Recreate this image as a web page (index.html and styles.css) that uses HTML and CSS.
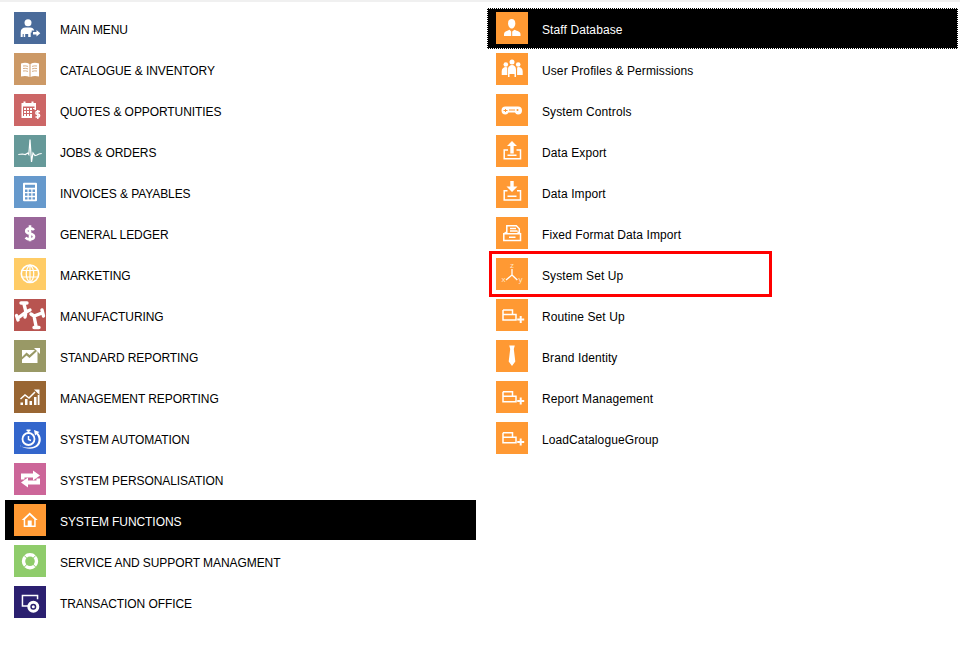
FILE: index.html
```html
<!DOCTYPE html>
<html lang="en">
<head>
<meta charset="utf-8">
<title>Menu</title>
<link rel="stylesheet" href="styles.css">
</head>
<body>
<div class="topstrip"></div>
<div class="columns">
  <ul class="menu menu-left">
    <li class="row"><span class="tile c-main"><svg viewBox="0 0 32 32"><circle cx="14" cy="10.700" r="3.500"/><path d="M6.700 25v-5c0-3 2-4.500 5-4.500h4.500c2 0 3.500 1 4 3h-2.500v2h-1v4.500h-2.500v-3h-3v3h-1.500v-3h-1v3z"/><path d="M19 20h3.500v-2l3.800 3.200-3.800 3.200v-2H19z"/></svg></span><span class="label">MAIN MENU</span></li>
    <li class="row"><span class="tile c-cat"><svg viewBox="0 0 32 32"><path d="M7 10.500c3-1 6-1 8.500.5v13c-2.500-1.300-5.500-1.300-8.500-.5z"/><path d="M25 10.500c-3-1-6-1-8.500.5v13c2.500-1.300 5.500-1.300 8.500-.5z"/><path class="cut" d="M9 13c1.700-.3 3.300-.2 5 .4M9 15.500c1.700-.3 3.300-.2 5 .4M9 18c1.700-.3 3.300-.2 5 .4M23 13c-1.700-.3-3.300-.2-5 .4M23 15.500c-1.700-.3-3.300-.2-5 .4M23 18c-1.700-.3-3.300-.2-5 .4"/></svg></span><span class="label">CATALOGUE &amp; INVENTORY</span></li>
    <li class="row"><span class="tile c-quo"><svg viewBox="0 0 32 32"><path d="M7.500 9h2V7.500h2V9h6V7.500h2V9h2.500v7h-1.500v-3.500H9V22h9v2H7.500z"/><path d="M10 14h2v2h-2zM13 14h2v2h-2zM16 14h2v2h-2zM19 14h2v1h-2zM10 17h2v2h-2zM13 17h2v2h-2zM16 17h2v2h-2zM10 20h2v2h-2zM13 20h2v2h-2zM16 20h2v2h-2z"/><path class="line" d="M26 17.500h-3c-1.500 0-1.500 2.800 0 2.800h1.500c1.500 0 1.500 2.800 0 2.800h-3M23.800 16v9"/></svg></span><span class="label">QUOTES &amp; OPPORTUNITIES</span></li>
    <li class="row"><span class="tile c-job"><svg viewBox="0 0 32 32"><path class="thin" d="M4.300 19.500l4-.5 3 .5 2.500-1.500 1 1.500L16 4.500 17.500 27l1.500-9 2 2.500 2-.5 2-1 2.700-.5"/></svg></span><span class="label">JOBS &amp; ORDERS</span></li>
    <li class="row"><span class="tile c-inv"><svg viewBox="0 0 32 32"><path fill-rule="evenodd" d="M10 6.700h12a1 1 0 0 1 1 1v16.500a1 1 0 0 1-1 1H10a1 1 0 0 1-1-1V7.700a1 1 0 0 1 1-1zm1 2v3h10v-3zM11 13.500V16h2.500v-2.500zm3.700 0V16h2.600v-2.500zm3.800 0V16H21v-2.500zM11 17.300v2.500h2.500v-2.500zm3.700 0v2.500h2.600v-2.500zm3.800 0v2.500H21v-2.500zM11 21.200v2.300h2.500v-2.300zm3.700 0v2.300h2.600v-2.300zm3.800 0v2.300H21v-2.300z"/></svg></span><span class="label">INVOICES &amp; PAYABLES</span></li>
    <li class="row"><span class="tile c-led"><svg viewBox="0 0 32 32"><path class="bold" d="M20 13c-1-1.200-2.500-1.600-4-1.600-2.300 0-3.800 1-3.800 2.700 0 1.700 1.500 2.300 3.800 2.700 2.400.4 4 1 4 2.800s-1.700 2.800-4 2.800c-1.800 0-3.300-.6-4.500-1.800M16 8.300v16"/></svg></span><span class="label">GENERAL LEDGER</span></li>
    <li class="row"><span class="tile c-mkt"><svg viewBox="0 0 32 32"><circle class="ring" cx="16" cy="15.800" r="8.700"/><path class="thin" d="M7.500 12.500h17M7.500 19h17M16 7v17.500M16 7c-5 4-5 13.500 0 17.500M16 7c5 4 5 13.500 0 17.500"/></svg></span><span class="label">MARKETING</span></li>
    <li class="row"><span class="tile c-mfg"><svg viewBox="0 0 32 32"><path class="limb" d="M10 5l2 8-8 6M12 13l4-2M12 13l-1 5M7 4h6M2.500 16.500L4 21"/><path class="limb" d="M17 15l3 2 8-3M20 17l2 10M28 11l1.500 6M20 28.500h5"/></svg></span><span class="label">MANUFACTURING</span></li>
    <li class="row"><span class="tile c-std"><svg viewBox="0 0 32 32"><path d="M8 10h13l-2 2-3.500 3-3-2.500L8 17zM8 19.500l4.500-4 3 2.500 6-5.500 2-2V23H8z"/><path d="M20 8h6v6z"/></svg></span><span class="label">STANDARD REPORTING</span></li>
    <li class="row"><span class="tile c-mgt"><svg viewBox="0 0 32 32"><path d="M6.500 21.500H9V24H6.500zM11 18h2.500v6H11zM15.500 20H18v4h-2.500zM20 16h2.500v8H20zM23.700 14h1.800v10h-1.800z"/><path class="line" d="M6.500 18l4.500-4 4 3 6-6"/><path d="M20 8.500h5.500V14z"/></svg></span><span class="label">MANAGEMENT REPORTING</span></li>
    <li class="row"><span class="tile c-aut"><svg viewBox="0 0 32 32"><circle class="ring2" cx="14.500" cy="17" r="6"/><path d="M12.500 7.500h4V9h-4zM13.500 9h2v2h-2z"/><path class="line" d="M14.500 14v3.500l2.500 1"/><path d="M6 23.500c6 4.500 15 4.500 19-.5 3-4 2-9-1-12l1.500-1-5.500-2 1 5.500 1.500-1.200c2.500 3 2.800 7 .5 10-3.500 4-10 4-17 1.700z"/></svg></span><span class="label">SYSTEM AUTOMATION</span></li>
    <li class="row"><span class="tile c-per"><svg viewBox="0 0 32 32"><path d="M7 16.500v-6h12V7.500l7 5-7 5v-3h-8.500v2z"/><path d="M26 15.500v6H14v3l-7-5 7-5v3h8.500v-2z"/></svg></span><span class="label">SYSTEM PERSONALISATION</span></li>
    <li class="row row-active"><span class="tile c-org"><svg viewBox="0 0 32 32"><path fill-rule="evenodd" d="M15.700 8.500l8 7.500h-2v7h-12v-7h-2zM15.700 11l-4.500 4.200v6.300h2.500v-5h4v5h2.500v-6.300z"/></svg></span><span class="label">SYSTEM FUNCTIONS</span></li>
    <li class="row"><span class="tile c-svc"><svg viewBox="0 0 32 32"><circle class="donut" cx="16" cy="16.300" r="6.500"/><path class="cut-g" d="M10 10.300l4 4M22 10.300l-4 4M10 22.300l4-4M22 22.300l-4-4"/></svg></span><span class="label">SERVICE AND SUPPORT MANAGMENT</span></li>
    <li class="row"><span class="tile c-trn"><svg viewBox="0 0 32 32"><path d="M7.700 8.700h16.600v4.500h-1.500v-3H9.200v9H14v1.500H7.700z"/><path fill-rule="evenodd" d="M19.300 14.700a6 6 0 1 1 0 12 6 6 0 0 1 0-12zm0 3a3 3 0 1 0 0 6 3 3 0 0 0 0-6z"/><circle cx="19.300" cy="20.700" r="1.500"/></svg></span><span class="label">TRANSACTION OFFICE</span></li>
  </ul>
  <ul class="menu menu-right">
    <li class="row row-active row-focus"><span class="tile c-org"><svg viewBox="0 0 32 32"><path d="M15.700 7c2.500 0 3.600 1.800 3.600 4.200 0 2.600-1.300 5.300-3.600 5.300s-3.600-2.700-3.600-5.300C12.100 8.800 13.200 7 15.700 7z"/><path d="M8 24v-2c0-2 2.500-3 5.500-4.200l1.700 1.700V24zM24.500 24v-2c0-2-3-3-6-4.200l-2.300 1.700V24z"/></svg></span><span class="label">Staff Database</span></li>
    <li class="row"><span class="tile c-org"><svg viewBox="0 0 32 32"><circle cx="16" cy="9" r="2.500"/><circle cx="9.800" cy="11.500" r="2.300"/><circle cx="22.200" cy="11.500" r="2.300"/><path d="M12 24v-7.500c0-3 2-4.500 4-4.500s4 1.500 4 4.500V24h-1.500v-3h-5v3z"/><path d="M5.700 22v-3.500c0-3 1.700-4.500 4.300-4.500l1.300.5V22H9zM26.700 22v-3.500c0-3-1.700-4.500-4.300-4.500l-1.300.5V22H23z"/></svg></span><span class="label">User Profiles &amp; Permissions</span></li>
    <li class="row"><span class="tile c-org"><svg viewBox="0 0 32 32"><path fill-rule="evenodd" d="M9.500 12.500h12.500a4 4 0 0 1 0 8c-1.500 0-2.300-1-3-2h-6.500c-.7 1-1.500 2-3 2a4 4 0 0 1 0-8zm-.5 2.500v1H7.500v1H9v1h1v-1h1.500v-1H10v-1zm12.500 0a1 1 0 1 0 0 2 1 1 0 0 0 0-2zM13 15.500v1h6v-1z"/></svg></span><span class="label">System Controls</span></li>
    <li class="row"><span class="tile c-org"><svg viewBox="0 0 32 32"><path d="M16 6l5 5h-3.300v7.500h-3.400V11H11z"/><path class="line" d="M12 15H8.200v8.700h16.300V15H20.500"/><path d="M11.500 19.500h9V21h-9z"/></svg></span><span class="label">Data Export</span></li>
    <li class="row"><span class="tile c-org"><svg viewBox="0 0 32 32"><path d="M16 16l5.500-5.500h-3.800V5h-3.400v5.500h-3.800z"/><path class="line" d="M11.500 14.800H8.200v9.200h16.300v-9.200h-3.500"/><path d="M11.500 19.500h9V21h-9z"/></svg></span><span class="label">Data Import</span></li>
    <li class="row"><span class="tile c-org"><svg viewBox="0 0 32 32"><path class="line" d="M10.800 16V8.700h9.500l3 3V16M14 11.500h6M14 14h7.500M7.800 16.800h16.700v6.800H7.800z"/><path d="M7.800 16l3-2v3h-3zM24.500 16l-3-2v3h3zM13 19.500h6.500V21H13z"/></svg></span><span class="label">Fixed Format Data Import</span></li>
    <li class="row"><span class="tile c-org"><svg viewBox="0 0 32 32"><path class="axisline" d="M16 11v6l-6 5M16 17l5.300 5"/><text class="axis" x="14" y="9.500">z</text><text class="axis" x="5.500" y="23.500">x</text><text class="axis" x="22.500" y="23.500">y</text></svg></span><span class="label">System Set Up</span></li>
    <li class="row"><span class="tile c-org"><svg viewBox="0 0 32 32"><path class="line" d="M7 11h9.500v4.500M7 11v10h13v-5.500H7"/><path d="M23.700 17h2v2.500h2.500v2h-2.500V24h-2v-2.500h-2.500v-2h2.500z"/></svg></span><span class="label">Routine Set Up</span></li>
    <li class="row"><span class="tile c-org"><svg viewBox="0 0 32 32"><path d="M13.200 5.500h5.600l-1 3.500 1.500 12.500-3.300 4.500-3.300-4.500 1.500-12.500z"/></svg></span><span class="label">Brand Identity</span></li>
    <li class="row"><span class="tile c-org"><svg viewBox="0 0 32 32"><path class="line" d="M7 10.800h9.500v4.500M7 10.800v10h13v-5.500H7"/><path d="M23.700 16.500h2V19h2.500v2h-2.500v2.500h-2V21h-2.500v-2h2.500z"/></svg></span><span class="label">Report Management</span></li>
    <li class="row"><span class="tile c-org"><svg viewBox="0 0 32 32"><path class="line" d="M7 10.800h9.500v4.500M7 10.800v10h13v-5.500H7"/><path d="M23.700 16.500h2V19h2.500v2h-2.500v2.500h-2V21h-2.500v-2h2.500z"/></svg></span><span class="label">LoadCatalogueGroup</span></li>
  </ul>
</div>
<div class="highlight"></div>
</body>
</html>
```
FILE: styles.css
```css
html, body {
  margin: 0;
  padding: 0;
  background: #fff;
}
body {
  position: relative;
  width: 960px;
  height: 652px;
  overflow: hidden;
  font-family: "Liberation Sans", Arial, sans-serif;
  font-size: 12px;
  color: #000;
}
.topstrip {
  height: 2px;
  background: #f0f0f0;
}
.columns {
  display: flex;
  padding: 6px 0 0 5px;
  gap: 12px;
}
.menu {
  list-style: none;
  margin: 0;
  padding: 0;
  display: flex;
  flex-direction: column;
  gap: 1px;
}
.menu-left { width: 471px; letter-spacing: -.08px; }
.menu-right { width: 469px; letter-spacing: .1px; }
.row {
  display: flex;
  align-items: center;
  height: 40px;
  padding-left: 9px;
  gap: 14px;
}
.menu-right .row { padding-left: 8px; }
.row-active {
  background: #000;
  color: #fff;
}
.row-focus {
  position: relative;
  z-index: 0;
}
.row-focus::before {
  content: "";
  position: absolute;
  inset: 0 -1px -1px -1px;
  background: #000;
  border: 1px dotted #fff;
  z-index: -1;
}
.tile {
  width: 32px;
  height: 32px;
  flex: none;
  display: block;
}
.tile svg {
  display: block;
  width: 32px;
  height: 32px;
  fill: #fff;
}
.label {
  white-space: nowrap;
  padding-top: 4px;
}
.line, .thin, .bold, .ring, .ring2, .limb, .donut, .cut, .cut-g, .axisline {
  fill: none;
  stroke: #fff;
}
.line { stroke-width: 1.5; }
.thin { stroke-width: 1.2; }
.bold { stroke-width: 2.6; }
.ring { stroke-width: 1.6; }
.ring2 { stroke-width: 1.8; }
.limb { stroke-width: 3.4; stroke-linecap: round; }
.donut { stroke-width: 3.4; }
.cut { stroke: #c96; stroke-width: .8; }
.cut-g { stroke: #8fcc6b; stroke-width: 1; }
.axisline { stroke-width: 1.3; }
.axis {
  font-family: "Liberation Sans", Arial, sans-serif;
  font-size: 8px;
  fill: #ffe6c8;
}
.c-main { background: #4a6b9a; }
.c-cat { background: #c96; }
.c-quo { background: #c66; }
.c-job { background: #699; }
.c-inv { background: #69c; }
.c-led { background: #969; }
.c-mkt { background: #fc6; }
.c-mfg { background: #b85450; }
.c-std { background: #996; }
.c-mgt { background: #963; }
.c-aut { background: #36c; }
.c-per { background: #c69; }
.c-org { background: #f93; }
.c-svc { background: #8fcc6b; }
.c-trn { background: #2b2070; }
.highlight {
  position: absolute;
  left: 489px;
  top: 251px;
  width: 283px;
  height: 46px;
  box-sizing: border-box;
  border: 3px solid #f00;
}
```
